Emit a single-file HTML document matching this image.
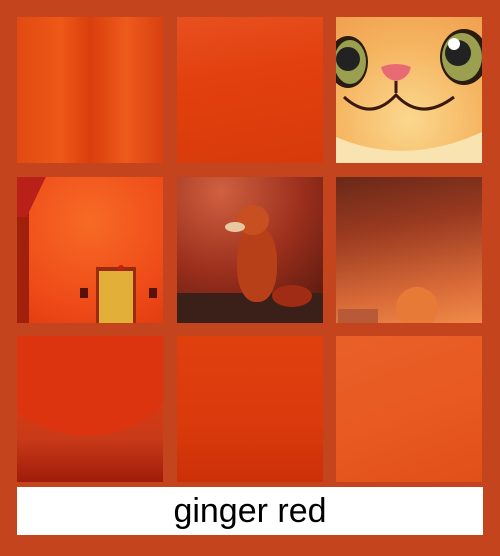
<!DOCTYPE html>
<html><head><style>
body{margin:0;width:500px;height:556px;background:#c4441e;position:relative;overflow:hidden;font-family:"Liberation Sans",sans-serif}
.t{position:absolute;width:146px;height:146px;overflow:hidden}
.lab{position:absolute;left:17px;top:487px;width:466px;height:48px;background:#fff;text-align:center;font-size:34px;line-height:48px;color:#000}
</style></head><body>
<div class="t" style="left:17px;top:17px;background:linear-gradient(90deg,#e24a10,#ee5818 30%,#d93e0c 50%,#ee5a1c 75%,#d84010)"></div>
<div class="t" style="left:177px;top:17px;background:linear-gradient(170deg,#e85020,#e2400e 40%,#d83a0a)"></div>
<div class="t" style="left:336px;top:17px;background:radial-gradient(circle at 50% 70%,#fbd88e,#f5b460 60%,#f0a050)">
<svg width="146" height="146" viewBox="0 0 146 146">
<ellipse cx="12" cy="45" rx="20" ry="26" fill="#2a1a10"/><ellipse cx="14" cy="45" rx="16" ry="22" fill="#9aa050"/><circle cx="12" cy="42" r="12" fill="#222"/>
<ellipse cx="128" cy="40" rx="24" ry="28" fill="#2a1a10"/><ellipse cx="126" cy="40" rx="20" ry="24" fill="#9aa050"/><circle cx="122" cy="36" r="13" fill="#222"/><circle cx="118" cy="27" r="6" fill="#fff"/>
<path d="M45 50 Q60 44 75 50 Q72 62 60 64 Q48 62 45 50Z" fill="#e86a72"/>
<path d="M60 64 V76 M8 80 Q35 105 60 78 Q85 105 118 80" stroke="#3a1a10" stroke-width="3" fill="none"/>
<path d="M0 120 Q70 150 146 115 V146 H0Z" fill="#f9e3b0"/>
</svg></div>
<div class="t" style="left:17px;top:177px;background:radial-gradient(circle at 50% 30%,#f76a25,#ee4a18 70%,#e23c10)">
<div style="position:absolute;left:0;top:10px;width:12px;height:136px;background:#a0200c"></div>
<div style="position:absolute;left:0;top:0;width:48px;height:40px;background:#b82018;clip-path:polygon(0 0,60% 0,20% 100%,0 100%)"></div>
<div style="position:absolute;left:79px;top:90px;width:40px;height:56px;background:#9a2a10"></div>
<div style="position:absolute;left:82px;top:94px;width:34px;height:52px;background:#e2b038"></div>
<div style="position:absolute;left:63px;top:111px;width:8px;height:10px;background:#5a1208"></div>
<div style="position:absolute;left:132px;top:111px;width:8px;height:10px;background:#5a1208"></div>
<div style="position:absolute;left:101px;top:88px;width:6px;height:6px;border-radius:50%;background:#c02010"></div>
</div>
<div class="t" style="left:177px;top:177px;background:radial-gradient(circle at 30% 10%,#d06040,#9a2e1c 50%,#4a160c)">
<div style="position:absolute;left:0;bottom:0;width:146px;height:30px;background:#3a2018"></div>
<div style="position:absolute;left:60px;top:50px;width:40px;height:75px;border-radius:45%;background:#b84018"></div>
<div style="position:absolute;left:60px;top:28px;width:32px;height:30px;border-radius:50%;background:#c85020"></div>
<div style="position:absolute;left:48px;top:45px;width:20px;height:10px;border-radius:50%;background:#e8c8a0"></div>
<div style="position:absolute;left:95px;top:108px;width:40px;height:22px;border-radius:50%;background:#a02c14"></div>
</div>
<div class="t" style="left:336px;top:177px;background:linear-gradient(170deg,#6a2818,#9a3a20 35%,#d86a38 75%,#f08a48)">
<div style="position:absolute;left:60px;top:110px;width:42px;height:42px;border-radius:50%;background:#e87a38"></div>
<div style="position:absolute;left:2px;top:132px;width:40px;height:14px;background:#b85a38"></div>
</div>
<div class="t" style="left:17px;top:336px;background:linear-gradient(180deg,#d22a0a,#e03a10 30%,#c83a18 70%,#a01c0a)">
<div style="position:absolute;left:-20px;top:-40px;width:180px;height:140px;border-radius:50%;background:#dd3410"></div>
</div>
<div class="t" style="left:177px;top:336px;background:linear-gradient(180deg,#e0400e,#da3a0c 60%,#cc3008)"></div>
<div class="t" style="left:336px;top:336px;background:linear-gradient(160deg,#e86028,#e85a22 50%,#e05018)"></div>
<div class="lab">ginger red</div>
</body></html>
